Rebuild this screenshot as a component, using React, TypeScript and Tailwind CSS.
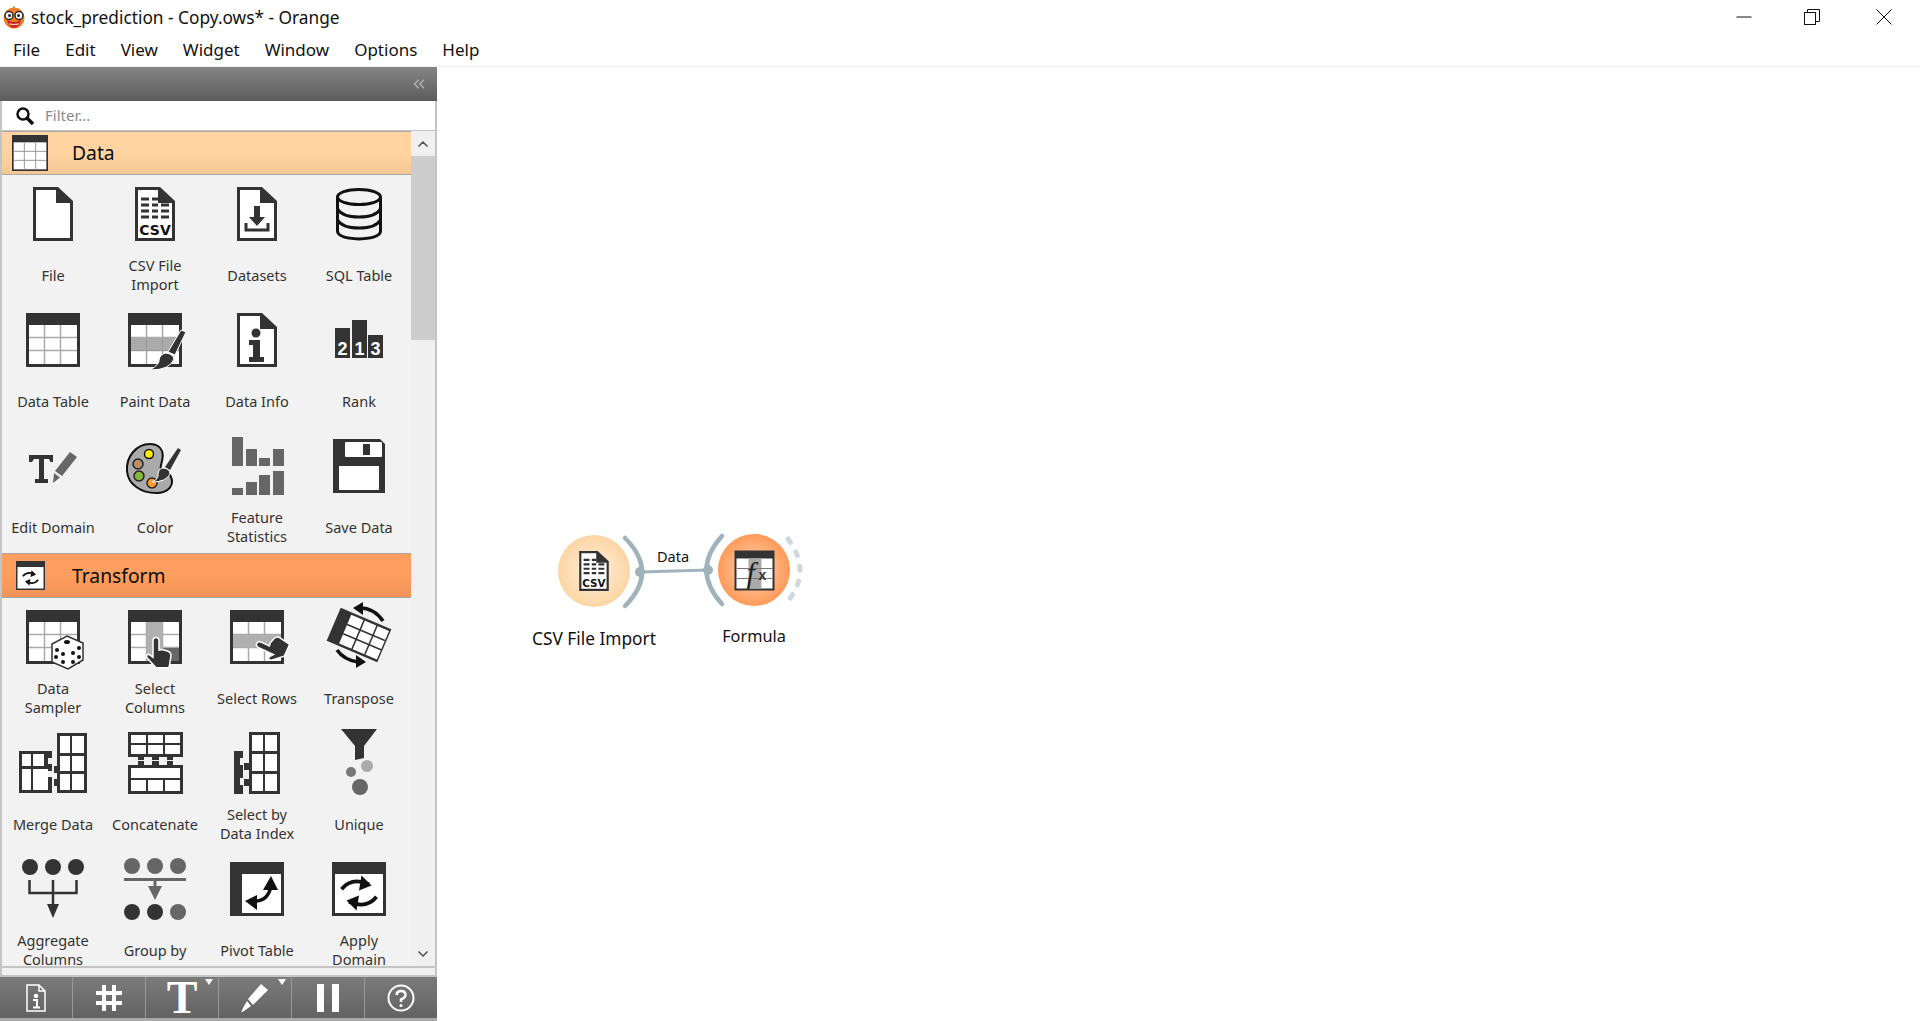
import React from 'react';
import { ChevronDown, ChevronUp, ChevronsLeft } from 'lucide-react';

const DARK = '#333333';
const GRAY = '#666666';

const Icon: React.FC<{ children: React.ReactNode }> = ({ children }) => (
  <svg viewBox="0 0 54 54" className="h-[54px] w-[54px] shrink-0 overflow-visible">
    {children}
  </svg>
);

// sheet of paper with the folded corner
const Doc = () => (
  <>
    <path d="M7 0H32L47 14V54H7Z" fill={DARK} />
    <path d="M10 3H30V16H44V51H10Z" fill="#fff" />
  </>
);

// plain table: dark frame, dark header, 3x3 white cells
const Table = () => (
  <>
    <rect width="54" height="54" fill={DARK} />
    <rect x="3" y="12" width="48" height="39" fill="#fff" />
    <path d="M18.5 12V51M34.5 12V51M3 24.5H51M3 37.5H51" stroke="#aaa" strokeWidth="1.5" />
  </>
);

const Hand = ({ transform }: { transform?: string }) => (
  <path
    transform={transform}
    d="M23 31q0-3.5 3-3.5t3 3.5v9l3-.5 3 .8 3 1q3 1 3 4.5l-2 12H26l-9-10q-1.5-3.5 2-3.5l4 3Z"
    fill={DARK}
    stroke="#fff"
    strokeWidth="1.5"
  />
);

const CsvShape = () => (
  <>
    <Doc />
    <path d="M13 12H21M24 12H30M13 18H21M24 18H30M33 18H41M13 24H21M24 24H30M33 24H41M13 30H21M24 30H30M33 30H41" stroke={DARK} strokeWidth="3" />
    <text x="27" y="48" textAnchor="middle" fontFamily="'DejaVu Sans', sans-serif" fontWeight="700" fontSize="14" fill="#111">
      CSV
    </text>
  </>
);

const Cycle = ({ s = 1, x = 0, y = 0 }: { s?: number; x?: number; y?: number }) => (
  <g transform={`translate(${x} ${y}) scale(${s})`} fill="none" stroke="#111" strokeWidth="3">
    <path d="M-14 -3Q-6 -13 8 -7" />
    <path d="M14 3Q6 13 -8 7" />
    <path d="M2 -14L10 -6L0 -2Z" fill="#111" strokeWidth="0" />
    <path d="M-2 14L-10 6L0 2Z" fill="#111" strokeWidth="0" />
  </g>
);

const icons: Record<string, React.ReactNode> = {
  File: <Doc />,
  'CSV File Import': <CsvShape />,
  Datasets: (
    <>
      <Doc />
      <path d="M24 19H30V30H35L27 39L19 30H24Z" fill={DARK} />
      <path d="M16 36V43H38V36" fill="none" stroke={DARK} strokeWidth="3" />
    </>
  ),
  'SQL Table': (
    <g fill="none" stroke="#111" strokeWidth="3">
      <ellipse cx="27" cy="10" rx="21.5" ry="7.5" />
      <path d="M5.5 10V44Q5.5 51 27 52Q48.5 51 48.5 44V10M5.5 22Q10 30 27 30Q44 30 48.5 22M5.5 33Q10 41 27 41Q44 41 48.5 33" />
    </g>
  ),
  'Data Table': <Table />,
  'Paint Data': (
    <>
      <Table />
      <rect x="3" y="25" width="48" height="12" fill="#aaa" />
      <path d="M3 37.5H51M18.5 25V37M34.5 25V37" stroke="#999" strokeWidth="1" />
      <path d="M53 17L58 19L47 42L40 39Z" fill={DARK} stroke="#fff" strokeWidth="1" />
      <path d="M38 40Q45 41 46 46Q42 57 22 57Q32 51 31 47Q32 41 38 40Z" fill={DARK} stroke="#fff" strokeWidth="1" />
    </>
  ),
  'Data Info': (
    <>
      <Doc />
      <circle cx="26" cy="20" r="4.5" fill={DARK} />
      <path d="M19 27H30V44H34V49H19V44H23V32H19Z" fill={DARK} />
    </>
  ),
  Rank: (
    <>
      <rect x="3" y="15" width="15" height="30" fill={DARK} />
      <rect x="20" y="7" width="15" height="38" fill={DARK} />
      <rect x="36" y="22" width="15" height="23" fill={DARK} />
      <g fontFamily="'Liberation Sans', sans-serif" fontWeight="700" fontSize="18" fill="#fff" textAnchor="middle">
        <text x="10.5" y="42">2</text>
        <text x="27.5" y="42">1</text>
        <text x="43.5" y="42">3</text>
      </g>
    </>
  ),
  'Edit Domain': (
    <>
      <path d="M3 16H27V23H24.5L23 20H18V40H22V44H9V40H13V20H8L6 23H3Z" fill={DARK} />
      <path d="M44 13L51 18L36 37L29 32Z" fill={GRAY} />
      <path d="M28 34L34 38.5L27 44Z" fill={GRAY} />
    </>
  ),
  Color: (
    <>
      <path d="M22 5C8 5 -2 18 -1 32C0 46 14 54 28 54C42 54 46 45 43 38C41 32 36 34 33 31C31 26 37 20 34 12C32 7 27 5 22 5Z" fill="#aaa" stroke="#111" strokeWidth="2" />
      <circle cx="21" cy="15" r="4.5" fill="#ffee00" stroke="#111" strokeWidth="1.5" />
      <circle cx="10" cy="25" r="5" fill="#b58f65" stroke="#222" strokeWidth="1.5" />
      <circle cx="11" cy="37" r="5" fill="#86b53c" stroke="#222" strokeWidth="1.5" />
      <circle cx="24" cy="44" r="5" fill="#ff9a2e" stroke="#222" strokeWidth="1.5" />
      <path d="M50 9L53 11L42 31L37 28Z" fill={DARK} />
      <path d="M34 29Q42 29 42 35Q38 43 24 43Q31 40 30 35Q30 30 34 29Z" fill={DARK} stroke="#fff" strokeWidth="1" />
    </>
  ),
  'Feature Statistics': (
    <g fill={GRAY}>
      <rect x="2" y="-2" width="11" height="29" />
      <rect x="16" y="10" width="11" height="17" />
      <rect x="29" y="19" width="11" height="8" />
      <rect x="43" y="10" width="11" height="17" />
      <rect x="2" y="49" width="11" height="7" />
      <rect x="16" y="43" width="11" height="13" />
      <rect x="29" y="36" width="11" height="20" />
      <rect x="43" y="32" width="11" height="24" />
    </g>
  ),
  'Save Data': (
    <>
      <path d="M1 0H48L53 5V54H1Z" fill={DARK} />
      <rect x="13" y="3" width="37" height="15" rx="1" fill="#fff" />
      <rect x="31" y="5" width="7" height="11" fill={DARK} />
      <rect x="7" y="27" width="40" height="24" fill="#fff" />
    </>
  ),
  'Data Sampler': (
    <>
      <Table />
      <path d="M41 26L57 33V50L42 59L26 52V34Z" fill="#fff" stroke={DARK} strokeWidth="1.5" />
      <g fill="#111">
        <ellipse cx="41" cy="32" rx="3" ry="2" />
        <circle cx="31" cy="40" r="2" /><circle cx="37" cy="44" r="2" />
        <circle cx="30" cy="47" r="2" /><circle cx="37" cy="52" r="2" />
        <circle cx="47" cy="43" r="2" /><circle cx="53" cy="38" r="2" />
        <circle cx="47" cy="52" r="2" /><circle cx="53" cy="47" r="2" />
      </g>
    </>
  ),
  'Select Columns': (
    <>
      <Table />
      <rect x="19" y="12" width="15" height="39" fill="#b0b0b0" />
      <rect x="35" y="38" width="16" height="13" fill={GRAY} />
      <Hand transform="translate(2 0)" />
    </>
  ),
  'Select Rows': (
    <>
      <Table />
      <rect x="3" y="25" width="48" height="12" fill="#b0b0b0" />
      <Hand transform="translate(6 6) rotate(-65 27 27) translate(-2 -6)" />
    </>
  ),
  Transpose: (
    <>
      <g transform="translate(27 25) rotate(23)">
        <rect x="-27.5" y="-18" width="55" height="36" fill={DARK} />
        <rect x="-15" y="-15.5" width="41" height="31" fill="#fff" />
        <path d="M-1 -16V16M13 -16V16M-15 -5H26M-15 5H26" stroke={DARK} strokeWidth="1.5" />
      </g>
      <path d="M28 -2Q42 -2 51 11" fill="none" stroke="#111" strokeWidth="3.5" />
      <path d="M21 -2L31 -8L31 5Z" fill="#111" />
      <path d="M5 40Q12 50 26 52" fill="none" stroke="#111" strokeWidth="3.5" />
      <path d="M34 52L24 45L24 58Z" fill="#111" />
    </>
  ),
  'Merge Data': (
    <>
      <path d="M-7 15H26V22H22V28H26V35H22V41H26V57H-7Z" fill={DARK} />
      <path d="M-4 18H5V30H-4ZM7 18H18V30H7ZM-4 33H5V54H-4ZM7 33H22V54H7Z" fill="#fff" />
      <path d="M31 -3H61V57H31V50H28V43H31V37H28V30H31Z" fill={DARK} />
      <path d="M34 0H44V17H34ZM46 0H58V17H46ZM34 20H44V35H34ZM46 20H58V35H46ZM34 38H44V54H34ZM46 38H58V54H46Z" fill="#fff" />
    </>
  ),
  Concatenate: (
    <>
      <path d="M0 -4H55V21H45V24H39V21H31V24H24V21H16V24H10V21H0Z" fill={DARK} />
      <path d="M3 -1H18V7H3ZM20 -1H35V7H20ZM37 -1H52V7H37ZM3 9H18V18H3ZM20 9H35V18H20ZM37 9H52V18H37Z" fill="#fff" />
      <path d="M0 29H10V25H16V29H24V25H31V29H39V25H45V29H55V58H0Z" fill={DARK} />
      <path d="M3 32H52V42H3ZM3 44H18V55H3ZM20 44H35V55H20ZM37 44H52V55H37Z" fill="#fff" />
    </>
  ),
  'Select by Data Index': (
    <>
      <path d="M19 -4H50V58H19V50H14V43H19V34H14V27H19Z" fill={DARK} />
      <path d="M22 -1H33V15H22ZM35 -1H47V15H35ZM22 18H33V35H22ZM35 18H47V35H35ZM22 38H33V55H22ZM35 38H47V55H35Z" fill="#fff" />
      <path d="M4 15H13V22H10V29H13V42H10V49H13V58H4Z" fill={DARK} />
    </>
  ),
  Unique: (
    <>
      <path d="M9 -7H45L32 10V22L23 24V10Z" fill={DARK} />
      <circle cx="35" cy="30" r="6" fill="#aaaaaa" />
      <circle cx="19" cy="36" r="5" fill="#777" />
      <circle cx="28" cy="51" r="8" fill={GRAY} />
    </>
  ),
  'Aggregate Columns': (
    <>
      <circle cx="4" cy="5" r="8" fill={DARK} />
      <circle cx="27" cy="5" r="8" fill={DARK} />
      <circle cx="50" cy="5" r="8" fill={DARK} />
      <path d="M3.5 18V31H50.5V18M27 18V43" fill="none" stroke={DARK} strokeWidth="2.5" />
      <path d="M21 42H33L27 56Z" fill={DARK} />
    </>
  ),
  'Group by': (
    <>
      <circle cx="4" cy="4" r="8" fill={GRAY} />
      <circle cx="27" cy="4" r="8" fill={GRAY} />
      <circle cx="50" cy="4" r="8" fill={GRAY} />
      <path d="M-4 17.5H58M27 18V27" stroke={GRAY} strokeWidth="3" />
      <path d="M20 24H34L27 38Z" fill={GRAY} />
      <circle cx="4" cy="50" r="8" fill={DARK} />
      <circle cx="27" cy="50" r="8" fill={DARK} />
      <circle cx="50" cy="50" r="8" fill={GRAY} />
    </>
  ),
  'Pivot Table': (
    <>
      <rect width="54" height="54" fill={DARK} />
      <rect x="12" y="12" width="39" height="39" fill="#fff" />
      <path d="M23 39Q38 40 41 24" fill="none" stroke="#111" strokeWidth="3.5" />
      <path d="M33 28L41 14L48 28Z" fill="#111" />
      <path d="M27 33L15 39L27 48Z" fill="#111" />
    </>
  ),
  'Apply Domain': (
    <>
      <rect width="54" height="54" fill={DARK} />
      <rect x="3" y="12" width="48" height="39" fill="#fff" />
      <Cycle x={27} y={31} s={1.25} />
    </>
  ),
};

const Widget = ({ name, lines }: { name: string; lines?: string[] }) => (
  <div className="flex h-[126px] flex-col items-center pt-[12px]">
    <Icon>{icons[name]}</Icon>
    <div className="flex h-[60px] flex-col justify-center pt-[8px] text-center text-[14.5px] leading-[19px] text-[#333]">
      {(lines ?? [name]).map((l) => (
        <span key={l} className="whitespace-nowrap">
          {l}
        </span>
      ))}
    </div>
  </div>
);

const dataWidgets: [string, string[]?][] = [
  ['File'],
  ['CSV File Import', ['CSV File', 'Import']],
  ['Datasets'],
  ['SQL Table'],
  ['Data Table'],
  ['Paint Data'],
  ['Data Info'],
  ['Rank'],
  ['Edit Domain'],
  ['Color'],
  ['Feature Statistics', ['Feature', 'Statistics']],
  ['Save Data'],
];

const transformWidgets: [string, string[]?][] = [
  ['Data Sampler', ['Data', 'Sampler']],
  ['Select Columns', ['Select', 'Columns']],
  ['Select Rows'],
  ['Transpose'],
  ['Merge Data'],
  ['Concatenate'],
  ['Select by Data Index', ['Select by', 'Data Index']],
  ['Unique'],
  ['Aggregate Columns', ['Aggregate', 'Columns']],
  ['Group by'],
  ['Pivot Table'],
  ['Apply Domain', ['Apply', 'Domain']],
];

const Logo = () => (
  <svg viewBox="0 0 24 24" className="h-[24px] w-[24px]">
    <path d="M11 3L12 0.5L13 3Z" fill="#3fa34d" />
    <circle cx="12" cy="13" r="10.5" fill="#ef7d22" />
    <path d="M5 15Q12 19 19 15Q17 23 12 23Q7 23 5 15Z" fill="#c8242b" />
    <path d="M7 18Q12 20 17 18L16 20H8Z" fill="#f7c9a8" />
    <g fill="#fff" stroke="#222" strokeWidth="1.4">
      <circle cx="7" cy="10.5" r="4" />
      <circle cx="17" cy="10.5" r="4" />
    </g>
    <circle cx="7.5" cy="10.5" r="1.5" fill="#222" />
    <circle cx="16.5" cy="10.5" r="1.5" fill="#222" />
  </svg>
);

const TitleBar = () => (
  <div className="flex h-[34px] items-center justify-between">
    <div className="flex items-center pl-[2px] text-[17.3px] text-[#111]">
      <Logo />
      <span className="ml-[5px] pt-[1px]">stock_prediction - Copy.ows* - Orange</span>
    </div>
    <div className="flex pr-[2px]">
      <div className="flex w-[69px] justify-center">
        <svg width="16" height="16"><path d="M0.5 8H15.5" stroke="#111" /></svg>
      </div>
      <div className="flex w-[71px] justify-center pr-[3px]">
        <svg width="16" height="16" fill="none" stroke="#111">
          <rect x="0.5" y="3.5" width="11" height="12" />
          <path d="M3.5 3.5V0.5H15.5V12.5H11.5" />
        </svg>
      </div>
      <div className="flex w-[69px] justify-center">
        <svg width="16" height="16"><path d="M0.5 0.5L15.5 15.5M15.5 0.5L0.5 15.5" stroke="#111" /></svg>
      </div>
    </div>
  </div>
);

const MenuBar = () => (
  <div className="flex h-[33px] items-center gap-[25px] border-b border-[#f0f0f0] pl-[13px] text-[17px] text-[#111]">
    {['File', 'Edit', 'View', 'Widget', 'Window', 'Options', 'Help'].map((m) => (
      <span key={m}>{m}</span>
    ))}
  </div>
);

const SectionHeader = ({ title, icon, tone, height }: { title: string; icon: React.ReactNode; tone: string; height: string }) => (
  <div className={`flex items-center border-y border-[#a8a8a8] ${height} ${tone}`}>
    <div className="flex w-[70px] justify-center pr-[14px]">{icon}</div>
    <span className="pt-[1px] text-[19.3px] text-[#0b0b0b]">{title}</span>
  </div>
);

const Scrollbar = () => (
  <div className="flex w-[24px] flex-col bg-[#f0f0f0]">
    <div className="flex h-[25px] items-center justify-center">
      <ChevronUp size={16} strokeWidth={2.5} color="#555" />
    </div>
    <div className="h-[184px] bg-[#cdcdcd]" />
    <div className="flex-1" />
    <div className="flex h-[25px] items-center justify-center">
      <ChevronDown size={16} strokeWidth={2.5} color="#555" />
    </div>
  </div>
);

const ToolButton = ({ children, menu, last }: { children: React.ReactNode; menu?: boolean; last?: boolean }) => (
  <div className={`relative flex h-full flex-1 items-center justify-center ${last ? '' : 'border-r border-[#999]'}`}>
    {children}
    {menu && <span className="absolute right-[5px] top-[2px] h-0 w-0 border-x-[4px] border-t-[6px] border-x-transparent border-t-white" />}
  </div>
);

const Toolbar = () => (
  <div className="flex h-[41px] bg-gradient-to-b from-[#7b7b7b] to-[#626262]">
    <ToolButton>
      <svg width="20" height="28" viewBox="0 0 20 28" fill="none" stroke="#fff" strokeWidth="1.5">
        <path d="M1 1H13L19 7V27H1ZM13 1V7H19" />
        <circle cx="10" cy="12" r="1.5" fill="#fff" />
        <path d="M7 16H11V23M7 23.5H14" strokeWidth="2" />
      </svg>
    </ToolButton>
    <ToolButton>
      <svg width="28" height="28" viewBox="0 0 28 28" stroke="#fff" strokeWidth="4">
        <path d="M9 1V27M19 1V27M1 9H27M1 19H27" />
      </svg>
    </ToolButton>
    <ToolButton menu>
      <span className="font-['Liberation_Serif',serif] text-[46px] font-bold leading-none text-white">T</span>
    </ToolButton>
    <ToolButton menu>
      <svg width="28" height="30" viewBox="0 0 28 30" fill="#fff">
        <path d="M20 1L27 7L12 22L7 16Z" />
        <path d="M6 18L10 23L3 28L0 29.5L2 25Z" />
      </svg>
    </ToolButton>
    <ToolButton>
      <svg width="22" height="28" fill="#fff">
        <rect width="7" height="28" />
        <rect x="15" width="7" height="28" />
      </svg>
    </ToolButton>
    <ToolButton last>
      <svg width="28" height="28" viewBox="0 0 28 28" fill="none" stroke="#fff" strokeWidth="2">
        <circle cx="14" cy="14" r="12.5" />
        <path d="M9.5 11Q10 7 14 7Q18.5 7 18.5 11Q18.5 13.5 14 15.5V18" strokeWidth="2.5" />
        <circle cx="14" cy="21.5" r="1.5" fill="#fff" stroke="none" />
      </svg>
    </ToolButton>
  </div>
);

const Sidebar = () => (
  <aside className="flex h-full w-[437px] flex-col border-x-2 border-[#c4c4c4]">
    <div className="-mx-[2px] flex h-[34px] items-center justify-end bg-gradient-to-b from-[#858585] to-[#5c5c5c] pr-[9px]">
      <ChevronsLeft size={18} color="#b0b0b0" strokeWidth={2} />
    </div>
    <div className="flex h-[30px] items-center border-b border-[#c4c4c4] bg-white pl-[13px]">
      <svg width="20" height="20" viewBox="0 0 20 20" fill="none" stroke="#111">
        <circle cx="8" cy="8" r="5.5" strokeWidth="2.5" />
        <path d="M12 12L18 18" strokeWidth="3.5" />
      </svg>
      <span className="ml-[10px] pb-[1px] text-[15px] text-[#8a8a8a]">Filter...</span>
    </div>
    <div className="flex min-h-0 flex-1">
      <div className="min-w-0 flex-1 overflow-hidden bg-[#f2f2f2]">
        <SectionHeader
          title="Data"
          height="h-[44px]"
          tone="bg-gradient-to-b from-[#ffd4a0] via-[#ffd4a0] to-[#f5c794]"
          icon={
            <svg width="36" height="36" viewBox="0 0 54 54">
              <rect width="54" height="54" fill={DARK} />
              <rect x="2.5" y="11" width="49" height="40.5" fill="#fff" />
              <path d="M18.5 11V52M35.5 11V52M3 24.5H51M3 38H51" stroke="#999" strokeWidth="1.5" />
            </svg>
          }
        />
        <div className="grid grid-cols-[repeat(4,102px)]">
          {dataWidgets.map(([name, lines]) => (
            <Widget key={name} name={name} lines={lines} />
          ))}
        </div>
        <SectionHeader
          title="Transform"
          height="h-[45px]"
          tone="bg-gradient-to-b from-[#ff9e5e] via-[#ff9e5e] to-[#ef9357]"
          icon={
            <svg width="29" height="29" viewBox="0 0 29 29">
              <rect width="29" height="29" fill={DARK} />
              <rect x="1.5" y="6" width="26" height="21.5" fill="#fff" />
              <Cycle x={14.5} y={17} s={0.55} />
            </svg>
          }
        />
        <div className="grid grid-cols-[repeat(4,102px)]">
          {transformWidgets.map(([name, lines]) => (
            <Widget key={name} name={name} lines={lines} />
          ))}
        </div>
      </div>
      <Scrollbar />
    </div>
    <div className="h-[11px] border-y-2 border-[#c4c4c4] bg-[#f0f0f0]" />
    <div className="-mx-[2px]">
      <Toolbar />
    </div>
    <div className="-mx-[2px] h-[3px] bg-[#a8a8a8]" />
  </aside>
);

const Diagram = () => (
  <div className="absolute left-[83px] top-[443px] h-[150px] w-[310px]">
    <svg width="310" height="150" className="overflow-visible">
      <defs>
        <radialGradient id="light">
          <stop offset="0%" stopColor="#fff1df" />
          <stop offset="100%" stopColor="#fdd5a4" />
        </radialGradient>
        <radialGradient id="strong">
          <stop offset="0%" stopColor="#ffd6b8" />
          <stop offset="100%" stopColor="#ff9a58" />
        </radialGradient>
      </defs>
      <circle cx="74" cy="61" r="36" fill="url(#light)" />
      <circle cx="234" cy="60" r="36" fill="url(#strong)" />
      <g fill="none" stroke="#a1b3ba" strokeLinecap="round">
        <path d="M105 28Q139 62 105 96" strokeWidth="4.5" />
        <path d="M202 26Q171 60 202 94" strokeWidth="4.5" />
        <path d="M120 62L188 60" strokeWidth="3" />
      </g>
      <circle cx="120" cy="62" r="5" fill="#a1b3ba" />
      <circle cx="188" cy="60" r="5" fill="#a1b3ba" />
      <path d="M268 29Q292 61 268 91" fill="none" stroke="#cfd8dc" strokeWidth="5" strokeLinecap="round" strokeDasharray="4 11" />
      <g transform="translate(54 41) scale(0.74)">
        <CsvShape />
      </g>
      <g transform="translate(214.5 40.5)">
        <rect width="40" height="40" fill={DARK} />
        <rect x="2" y="8" width="36" height="30" fill="#fff" />
        <rect x="14" y="8" width="13" height="30" fill="#aaa" />
        <path d="M2 18H38M2 28H38" stroke="#777" strokeWidth="1" />
        <text x="12" y="32" fontFamily="'Liberation Serif', serif" fontStyle="italic" fontSize="30" fill="#222">f</text>
        <text x="24" y="29" fontFamily="'Liberation Sans', sans-serif" fontWeight="700" fontSize="14" fill={DARK}>x</text>
      </g>
    </svg>
    <span className="absolute left-[153px] top-[36px] -translate-x-1/2 text-[14.5px] text-[#111]">Data</span>
    <span className="absolute left-[74px] top-[116px] -translate-x-1/2 whitespace-nowrap text-[17.3px] text-[#111]">CSV File Import</span>
    <span className="absolute left-[234px] top-[114px] -translate-x-1/2 text-[16.3px] text-[#111]">Formula</span>
  </div>
);

export default function App() {
  return (
    <div className="flex h-[1021px] w-[1920px] flex-col overflow-hidden bg-white font-['Noto_Sans','Open_Sans',sans-serif]">
      <TitleBar />
      <MenuBar />
      <div className="flex min-h-0 flex-1">
        <Sidebar />
        <main className="relative flex-1 bg-white">
          <Diagram />
        </main>
      </div>
    </div>
  );
}
